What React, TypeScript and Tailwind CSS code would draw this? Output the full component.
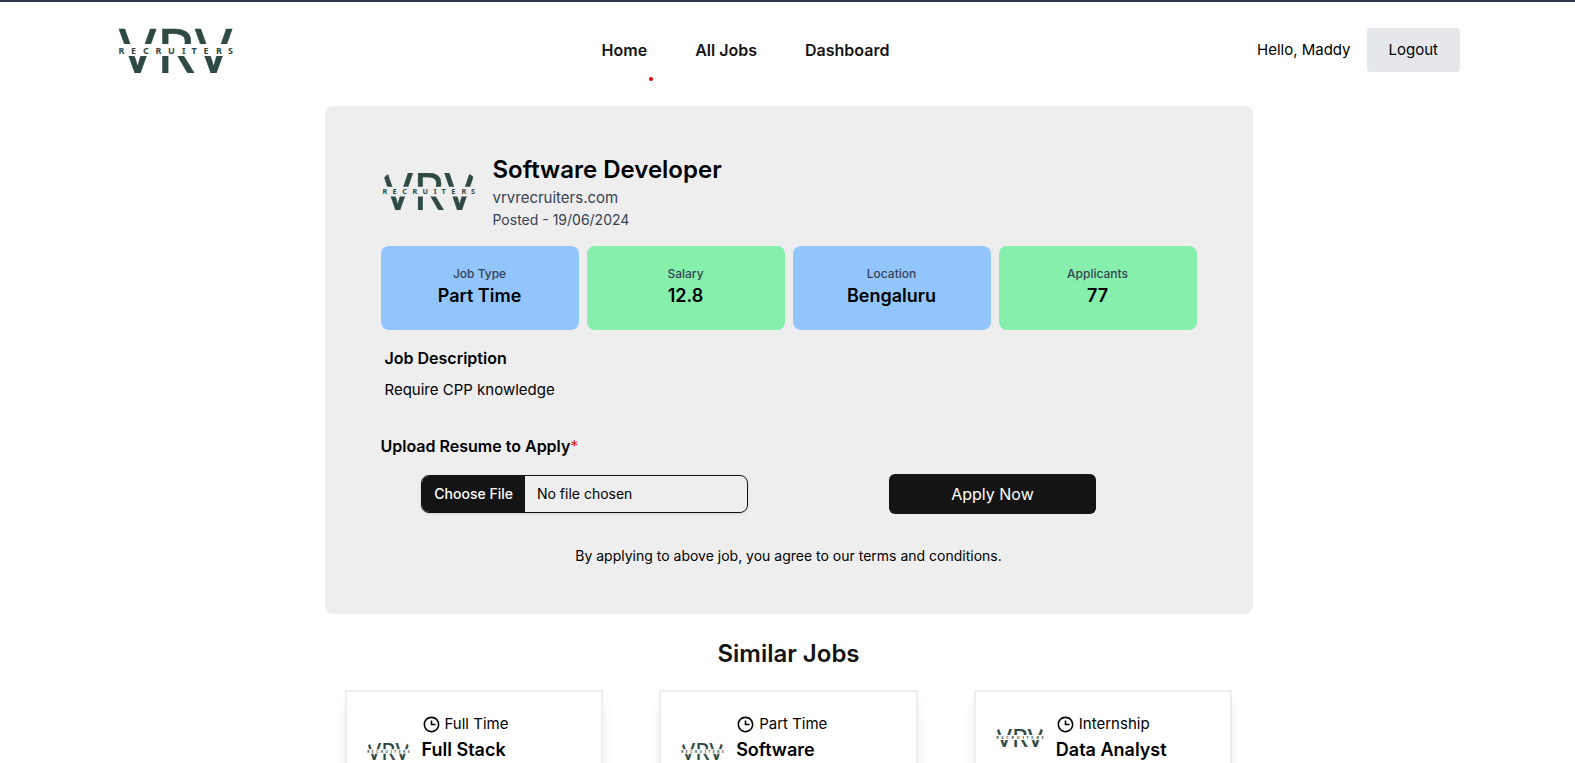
import { useId } from "react";
import { BiTime } from "react-icons/bi";

function Logo({ className }: { className: string }) {
  const bands = useId();
  return (
    <svg viewBox="0 0 116 46" className={`overflow-hidden ${className}`} role="img" aria-label="VRV Recruiters" fill="#2f4a45">
      <clipPath id={bands}>
        <rect width="116" height="17" />
        <rect y="29" width="116" height="17" />
      </clipPath>
      <g clipPath={`url(#${bands})`}>
        <text y="45.500" x="1 38.500 77" fontSize="62" fontWeight="400" fontFamily="'Noto Sans', 'Open Sans', sans-serif" stroke="#2f4a45" strokeWidth="0.5">
          VRV
        </text>
      </g>
      <text
        y="26.500"
        x="0.500 13 25 37.500 50 64 73.500 85.500 98 110"
        fontSize="9"
        fontWeight="700"
        fontFamily="'Noto Sans', 'Open Sans', sans-serif"
      >
        RECRUITERS
      </text>
    </svg>
  );
}

function Stat({ label, value, tone }: { label: string; value: string; tone: string }) {
  return (
    <div className={`rounded-lg py-5 text-center ${tone}`}>
      <p className="text-xs font-medium text-gray-700">{label}</p>
      <p className="text-lg font-semibold">{value}</p>
    </div>
  );
}

function JobCard({ type, title, logo }: { type: string; title: string; logo: string }) {
  return (
    <article className="border-2 border-[#eeeeee] bg-white p-5 shadow-lg">
      <div className="flex items-center gap-3">
        <Logo className={`shrink-0 rounded-md ${logo}`} />
        <div>
          <p className="flex items-center gap-1 text-[15px] leading-6">
            <BiTime className="size-[19px]" />
            {type}
          </p>
          <h3 className="text-lg font-semibold">{title}</h3>
        </div>
      </div>
    </article>
  );
}

export default function App() {
  return (
    <div className="min-h-screen border-t-2 border-[#2d3748] bg-white font-['Inter',sans-serif] text-black">
      <header className="flex items-center justify-between py-[25px] pr-[115px] pl-[118px]">
        <a href="#home">
          <Logo className="w-[116px]" />
        </a>
        <nav className="flex gap-12 font-semibold text-[#141414]">
          <a href="#home" className="relative">
            Home
            <span className="absolute -right-1.5 -bottom-[19px] size-1 rounded-full bg-red-600" />
          </a>
          <a href="#jobs">All Jobs</a>
          <a href="#dashboard">Dashboard</a>
        </nav>
        <div className="flex items-center gap-4 text-[15px]">
          <span>Hello, Maddy</span>
          <button type="button" className="h-11 rounded bg-gray-200 px-[22px]">
            Logout
          </button>
        </div>
      </header>

      <main className="pt-2 pb-12 pl-0.5">
        <section className="mx-auto max-w-[928px] rounded-lg bg-[#eeeeee] px-14 py-12">
          <div className="flex items-center gap-4">
            <Logo className="w-24 rounded-xl px-px" />
            <div>
              <h1 className="text-2xl font-semibold">Software Developer</h1>
              <p className="text-[15px] leading-6 text-gray-700">vrvrecruiters.com</p>
              <p className="text-sm text-gray-700">Posted - 19/06/2024</p>
            </div>
          </div>

          <div className="mt-4 grid grid-cols-4 gap-2">
            <Stat label="Job Type" value="Part Time" tone="bg-[#93c5fd]" />
            <Stat label="Salary" value="12.8" tone="bg-[#86efac]" />
            <Stat label="Location" value="Bengaluru" tone="bg-[#93c5fd]" />
            <Stat label="Applicants" value="77" tone="bg-[#86efac]" />
          </div>

          <div className="mt-4 px-1">
            <h2 className="font-semibold">Job Description</h2>
            <p className="mt-2 text-[15px] leading-6">Require CPP knowledge</p>
          </div>

          <form className="mt-8">
            <label htmlFor="resume" className="block font-semibold">
              Upload Resume to Apply<span className="font-normal text-[#dc2626]">*</span>
            </label>
            <div className="mt-4 grid grid-cols-2 items-center justify-items-center">
              <input
                id="resume"
                type="file"
                className="h-[38px] w-4/5 rounded-lg border border-[#141414] text-sm leading-9 shadow-sm file:mr-3 file:h-9 file:bg-[#141414] file:px-3 file:text-sm file:font-medium file:text-white"
              />
              <button type="button" className="h-10 w-[207px] rounded-md bg-[#141414] text-white">
                Apply Now
              </button>
            </div>
            <p className="mt-8 text-center text-sm">
              By applying to above job, you agree to our terms and conditions.
            </p>
          </form>
        </section>

        <section className="mx-auto mt-6 max-w-[888px]">
          <h2 className="text-center text-2xl font-semibold text-[#141414]">Similar Jobs</h2>
          <div className="mt-5 grid grid-cols-3 gap-14">
            <JobCard type="Full Time" title="Full Stack Developer" logo="w-[43px]" />
            <JobCard type="Part Time" title="Software Developer" logo="w-[43px]" />
            <JobCard type="Internship" title="Data Analyst" logo="w-12" />
          </div>
        </section>
      </main>
    </div>
  );
}
